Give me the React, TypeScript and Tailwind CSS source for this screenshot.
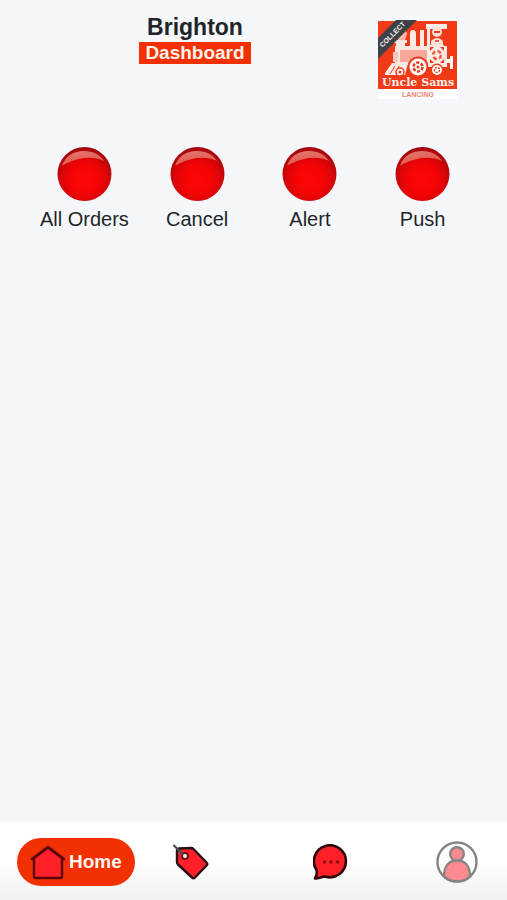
const ACTIONS = ['All Orders', 'Cancel', 'Alert', 'Push']

export default function App() {
  return (
    <div className="min-h-screen flex flex-col bg-[#f5f7fa] font-['Liberation_Sans',Arial,sans-serif] text-[#212529]">
      <header className="flex items-start gap-4 pt-3 pl-7 pr-[50px]">
        <div className="flex-1 flex flex-col items-center">
          <h1 className="text-[23px] leading-[30px] font-bold">Brighton</h1>
          <p className="bg-[#f23000] px-[6px] text-[19px] leading-[22px] font-bold text-[#fff3ee]">Dashboard</p>
        </div>
        <BrandLogo />
      </header>

      <main className="flex-1 mt-12 px-7">
        <div className="grid grid-cols-4">
          {ACTIONS.map((label) => (
            <button key={label} type="button" className="flex flex-col items-center gap-1 text-[20px] leading-[26px]">
              <RedBall id={label.replace(' ', '')} />
              {label}
            </button>
          ))}
        </div>
      </main>

      <nav className="grid grid-cols-[118px_4fr_6fr_3fr] items-center bg-linear-to-b from-white from-50% to-[#f0f0f0] pt-4 pb-[14px] pl-[17px] pr-2">
        <button type="button" className="flex items-center gap-1 h-12 rounded-3xl bg-[#f23000] pl-[13px] text-[19px] font-bold text-[#fff3ee]">
          <HomeIcon />
          Home
        </button>
        <button type="button" aria-label="Offers" className="flex justify-center">
          <TagIcon />
        </button>
        <button type="button" aria-label="Messages" className="flex justify-center">
          <ChatIcon />
        </button>
        <button type="button" aria-label="Account" className="flex justify-center">
          <UserIcon />
        </button>
      </nav>
    </div>
  )
}

function RedBall({ id }: { id: string }) {
  return (
    <svg width="55" height="55" viewBox="0 0 55 55" aria-hidden="true">
      <defs>
        <radialGradient id={`ball-${id}`} cx="0.5" cy="0.6" r="0.58">
          <stop offset="0" stopColor="#ff0606" />
          <stop offset="0.45" stopColor="#f60405" />
          <stop offset="0.75" stopColor="#d80507" />
          <stop offset="1" stopColor="#a0080e" />
        </radialGradient>
        <linearGradient id={`shine-${id}`} x1="0.2" y1="0.1" x2="0.5" y2="1">
          <stop offset="0" stopColor="#e88a7c" stopOpacity="0.85" />
          <stop offset="0.5" stopColor="#e8786c" stopOpacity="0.8" />
          <stop offset="1" stopColor="#f09488" stopOpacity="0.65" />
        </linearGradient>
      </defs>
      <circle cx="27.5" cy="27" r="27" fill={`url(#ball-${id})`} />
      <path d="M5 19C8 9 17 4 27 4C36 4 43 7.500 47 14C40 10.500 30 10 22 12C14 14 9 16 5 19Z" fill={`url(#shine-${id})`} />
    </svg>
  )
}

function HomeIcon() {
  return (
    <svg width="35" height="35" viewBox="0 0 35 35" fill="#ff2028" stroke="#5c0508" strokeWidth="2.400" strokeLinejoin="round" strokeLinecap="round" aria-hidden="true">
      <path d="M4 13V31.500Q4 33 5.500 33H30.500Q32 33 32 31.500V13L18 2.500Z" />
      <path d="M2 14L18 2L34 14" fill="none" />
    </svg>
  )
}

function TagIcon() {
  return (
    <svg width="36" height="36" viewBox="0 0 36 36" aria-hidden="true">
      <path d="M5.500 4.500L18 4Q19.500 4 20.500 5L33.500 18.500Q35 20 33.500 21.500L22 33.500Q20.500 35 19 33.500L5 20.500Q4 19.500 4 18L4 6Z" fill="#ff2028" stroke="#2a1012" strokeWidth="2.400" strokeLinejoin="round" />
      <circle cx="12" cy="12" r="3" fill="#fff" stroke="#6a1014" strokeWidth="2" />
      <path d="M1 1.500L9.500 10" stroke="#3c5558" strokeWidth="2.200" strokeLinecap="round" />
    </svg>
  )
}

function ChatIcon() {
  return (
    <svg width="36" height="36" viewBox="0 0 36 36" aria-hidden="true">
      <path d="M2 34.500C4 31 4 28 3.500 26A16 16 0 1 1 12 32.500C9 32.500 6 34.500 2 34.500Z" fill="#ff2028" stroke="#2a080a" strokeWidth="2.600" strokeLinejoin="round" />
      <g fill="#8c0c12">
        <circle cx="11.500" cy="18" r="1.800" />
        <circle cx="18" cy="18" r="1.800" />
        <circle cx="24.500" cy="18" r="1.800" />
      </g>
    </svg>
  )
}

function UserIcon() {
  return (
    <svg width="42" height="42" viewBox="0 0 42 42" stroke="#858585" strokeWidth="2.400" aria-hidden="true">
      <circle cx="21" cy="21" r="19.500" fill="#fdfdfd" />
      <path d="M8 35.500C8 25 13 19.500 21 19.500C29 19.500 34 25 34 35.500C27 42 15 42 8 35.500Z" fill="#ff8a90" />
      <circle cx="21" cy="13" r="6.800" fill="#ff8a90" />
    </svg>
  )
}

function BrandLogo() {
  return (
    <svg width="79" height="79" viewBox="0 0 79 79" className="mt-2 shrink-0" role="img" aria-label="Uncle Sams Lancing">
      <rect width="79" height="79" fill="#fff" />
      <rect y="1" width="79" height="68" fill="#f03a18" />

      {/* chimney, dome and whistle */}
      <path d="M18 14Q18 10 23 10Q29 10 29 14L27 20V28H20V20Z" fill="#fbb5a6" />
      <path d="M16 20H29V23H27V29H18V23H16Z" fill="#ffe6df" />
      <path d="M32 27V14Q32 10 35 10Q38 10 38 14V27Z" fill="#ffece6" />
      <path d="M42 27V10H46V27Z" fill="#ffece6" />

      {/* boiler */}
      <rect x="17" y="26" width="32" height="19" fill="#ffe6df" />
      <rect x="22" y="30" width="27" height="12" fill="#f9a79b" />
      <path d="M15 32H20V42H15Z" fill="#fbc6bb" />

      {/* cab */}
      <path d="M48 4H69V9H66V26H69V47H49V9H48Z" fill="#ffece6" />
      <path d="M52 9H66V25H52Z" fill="#f03a18" />
      <circle cx="59" cy="12" r="5" fill="#ffe0d8" />
      <path d="M56 12H62" stroke="#f03a18" strokeWidth="2" />
      <path d="M53 25V21Q59 15 65 21V25Z" fill="#ffe0d8" />
      <path d="M57 21H61" stroke="#f03a18" strokeWidth="1.500" />
      <path d="M52 27H56L52 31ZM66 27V31L62 27ZM52 43V39L56 43ZM66 43H62L66 39Z" fill="#f03a18" />
      <circle cx="59" cy="35" r="4" fill="none" stroke="#f05a40" strokeWidth="2.500" strokeDasharray="4 2.283" />
      <path d="M69 39H72V36H75V49H72V43H69Z" fill="#fff" />

      {/* cowcatcher */}
      <path d="M14 43H30L27 55H7V53Z" fill="#ffece6" />
      <path d="M17 46L12 54M21 46L18 54" stroke="#f03a18" />

      {/* wheels */}
      <circle cx="22" cy="52" r="4" fill="#fff" stroke="#f03a18" strokeWidth="1.500" />
      <circle cx="22" cy="52" r="1.500" fill="#f03a18" />
      <circle cx="40" cy="47" r="10.500" fill="#f03a18" />
      <circle cx="40" cy="47" r="8.500" fill="#fff" />
      <circle cx="40" cy="47" r="4.500" fill="none" stroke="#f03a18" strokeWidth="2.500" strokeDasharray="3.200 1.510" />
      <circle cx="40" cy="47" r="1.500" fill="#f03a18" />
      <circle cx="59" cy="50" r="6.500" fill="#f03a18" />
      <circle cx="59" cy="50" r="5" fill="#fff" />
      <circle cx="59" cy="50" r="2.500" fill="none" stroke="#f03a18" strokeWidth="1.500" strokeDasharray="2 1.140" />

      <text x="40" y="66" textAnchor="middle" className="font-['DejaVu_Serif',serif] text-[11px] font-bold" fill="#fff0ea">Uncle Sams</text>
      <text x="40" y="77" textAnchor="middle" className="text-[7px] font-bold" fill="#ee8573">LANCING</text>

      {/* corner ribbon */}
      <path d="M18 0H39L0 39V18Z" fill="#3e4247" />
      <text x="14" y="17" textAnchor="middle" transform="rotate(-45 14 14)" className="text-[7px] font-bold" fill="#f2f2f2">COLLECT</text>
    </svg>
  )
}
